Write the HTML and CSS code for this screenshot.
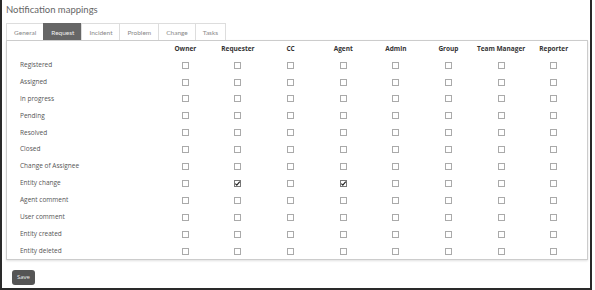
FILE: index.html
```html
<!DOCTYPE html>
<html lang="en">
<head>
    <meta charset="UTF-8">
    <meta name="viewport" content="width=device-width, initial-scale=1.0">
    <title>Notification mappings</title>
    <link rel="stylesheet" href="styles.css">
</head>
<body>

    <div class="frame">
        <h2 class="page-title">Notification mappings</h2>

        <!-- Tabs -->
        <div class="tabs">
            <span class="tab">General</span>
            <span class="tab active">Request</span>
            <span class="tab">Incident</span>
            <span class="tab">Problem</span>
            <span class="tab">Change</span>
            <span class="tab">Tasks</span>
        </div>

        <!-- Mapping table -->
        <div class="panel">
            <table class="mappings" id="mappings">
                <thead>
                    <tr>
                        <th class="label-col"></th>
                        <th>Owner</th>
                        <th>Requester</th>
                        <th>CC</th>
                        <th>Agent</th>
                        <th>Admin</th>
                        <th>Group</th>
                        <th>Team Manager</th>
                        <th>Reporter</th>
                    </tr>
                </thead>
                <tbody id="mapping-rows">
                    <!-- Rows are built below -->
                </tbody>
            </table>
        </div>

        <button class="save-btn">Save</button>
    </div>

    <script>
        const events = [
            'Registered', 'Assigned', 'In progress', 'Pending', 'Resolved', 'Closed',
            'Change of Assignee', 'Entity change', 'Agent comment', 'User comment',
            'Entity created', 'Entity deleted'
        ];

        // which boxes are ticked: event -> column indexes
        const checked = { 'Entity change': [1, 3] };

        const tbody = document.getElementById('mapping-rows');
        events.forEach(name => {
            let html = `<td class="label-col">${name}</td>`;
            for (let i = 0; i < 8; i++) {
                const on = (checked[name] || []).includes(i);
                html += `<td><span class="cb${on ? ' on' : ''}">${on ? '<svg viewBox="0 0 8 8" width="7" height="7"><path d="M1.5 4.2 L3.2 5.8 L6.6 1.8" fill="none" stroke="#222" stroke-width="1.3"/></svg>' : ''}</span></td>`;
            }
            const row = document.createElement('tr');
            row.innerHTML = html;
            tbody.appendChild(row);
        });
    </script>
</body>
</html>
```

FILE: styles.css
```css
body {
    margin: 0;
    padding: 0;
    background-color: #fff;
    font-family: 'Open Sans', sans-serif;
    color: #555;
}

.frame {
    width: 592px;
    height: 290px;
    box-sizing: border-box;
    border-left: 2px solid #2a2a2a;
    border-right: 2px solid #2a2a2a;
    border-bottom: 2px solid #2a2a2a;
    padding: 0 2px 0 4px;
}

.page-title {
    margin: 0;
    padding-top: 2px;
    height: 21px;
    font-family: 'Lato', sans-serif;
    font-size: 9.5px;
    font-weight: 400;
    color: #666;
    line-height: 15px;
}

/* Tabs */
.tabs {
    display: flex;
    height: 17px;
}

.tab {
    display: flex;
    align-items: center;
    justify-content: center;
    padding: 0 7px;
    border: 1px solid #ddd;
    border-bottom: none;
    margin-right: -1px;
    font-family: 'Lato', sans-serif;
    font-size: 6.5px;
    color: #888;
    background-color: #fff;
}

.tab.active {
    background-color: #666;
    border-color: #666;
    color: #eee;
}

/* Panel */
.panel {
    width: 582px;
    box-sizing: border-box;
    border: 1px solid #ccc;
    box-shadow: 0 1px 2px rgba(0, 0, 0, 0.12);
    padding: 0 7px 0 0;
}

.mappings {
    width: 100%;
    border-collapse: collapse;
    table-layout: fixed;
}

.mappings th {
    height: 15px;
    padding: 0;
    font-size: 6.5px;
    font-weight: 700;
    color: #333;
    text-align: center;
}

.mappings td {
    height: 16.9px;
    padding: 0;
    text-align: center;
    font-size: 6.5px;
    vertical-align: middle;
}

.mappings .label-col {
    width: 152px;
    text-align: left;
    padding-left: 13px;
    box-sizing: border-box;
    color: #555;
}

.cb {
    display: inline-block;
    width: 7px;
    height: 7px;
    border: 1px solid #aaa;
    box-sizing: border-box;
    vertical-align: middle;
    position: relative;
}

.cb svg {
    position: absolute;
    left: -1px;
    top: -1px;
}

.cb.on {
    border-color: #777;
}

/* Save button */
.save-btn {
    margin: 10px 0 0 6px;
    width: 23px;
    height: 15px;
    padding: 0;
    border: none;
    border-radius: 3px;
    background-color: #555;
    color: #eee;
    font-family: 'Open Sans', sans-serif;
    font-size: 6px;
}
```
